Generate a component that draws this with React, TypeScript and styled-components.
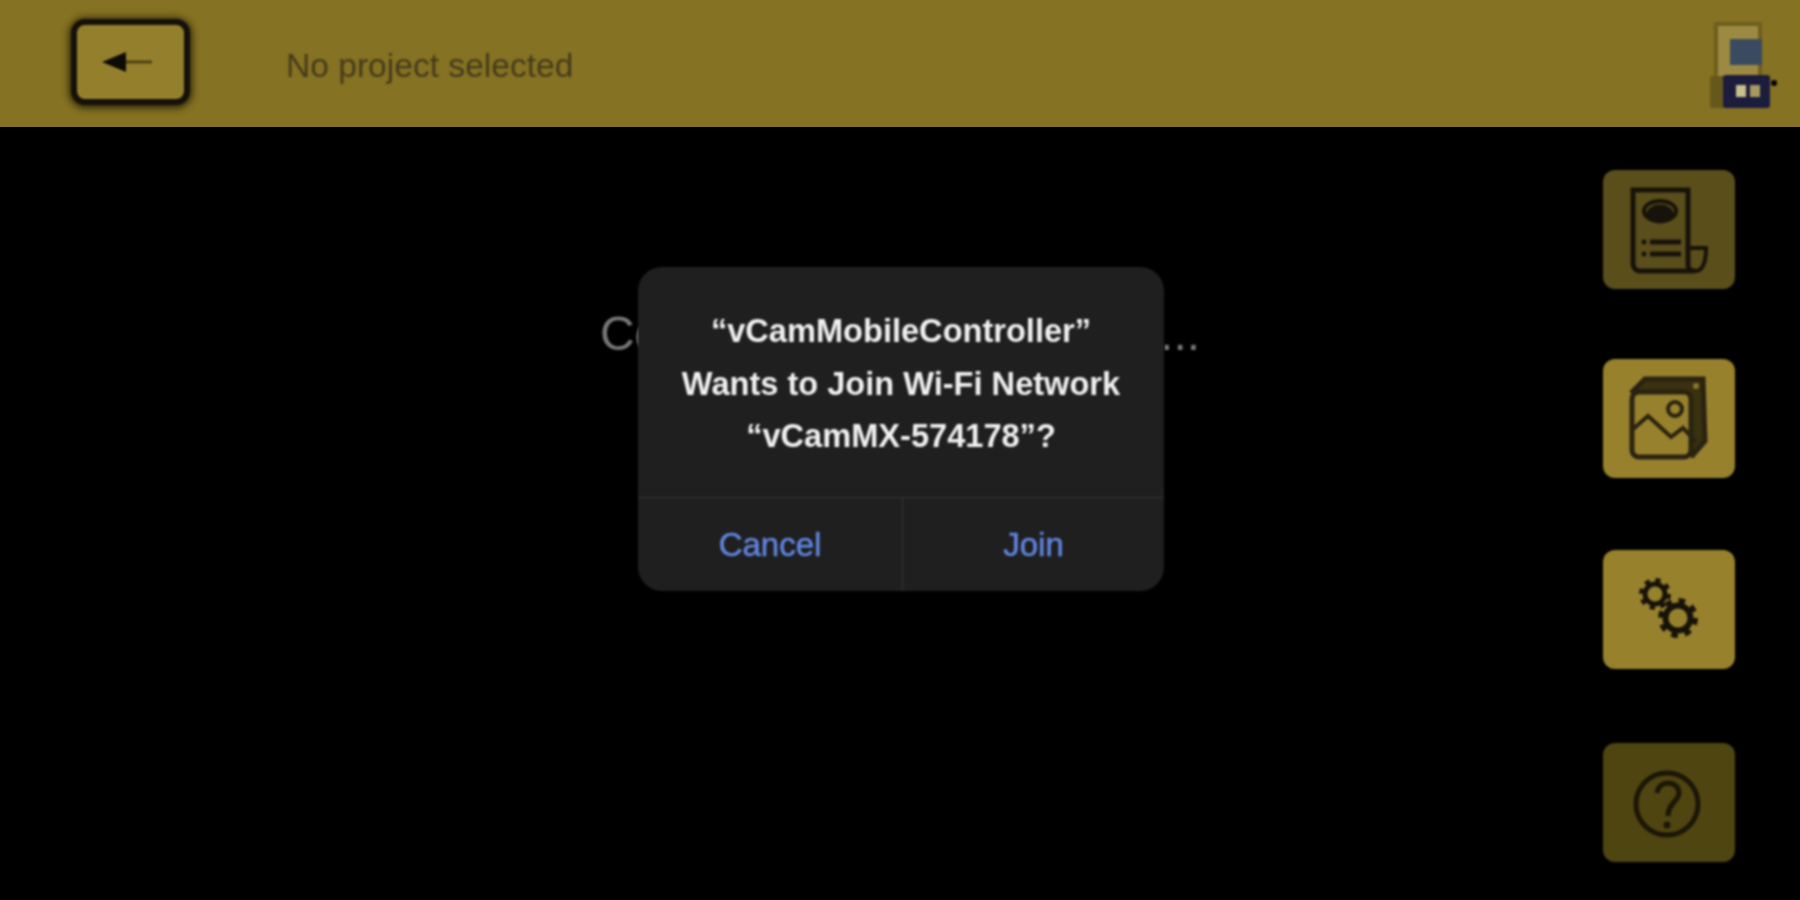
import { createGlobalStyle, styled } from "styled-components";

const GlobalStyle = createGlobalStyle`
  html, body {
    margin: 0;
    background: #000;
  }
  body {
    font-family: "Liberation Sans", Arial, sans-serif;
  }
`;

const Screen = styled.div`
  position: relative;
  width: 1800px;
  height: 900px;
  display: flex;
  flex-direction: column;
  overflow: hidden;
  background: #000;
`;

const Header = styled.header`
  height: 127px;
  flex: none;
  display: flex;
  align-items: center;
  padding: 0 20px 0 71px;
  background: #857222;
`;

const BackButton = styled.button`
  width: 119px;
  height: 86px;
  margin-top: -4px;
  box-sizing: border-box;
  padding: 0 8px 0 0;
  display: flex;
  align-items: center;
  justify-content: center;
  background: #94802c;
  border: 6px solid #15110a;
  border-radius: 14px;
  box-shadow: 0 1px 7px 2px rgba(15, 12, 2, 0.75);
  filter: blur(0.8px);
`;

const ProjectName = styled.span`
  margin: 4px 0 0 96px;
  flex: 1;
  font-size: 33.6px;
  color: #453b1c;
  filter: blur(0.9px);
`;

const DeviceGraphic = styled.svg`
  display: block;
  margin-top: 6px;
  filter: blur(1.2px);
`;

const Main = styled.main`
  flex: 1;
  display: grid;
  grid-template-columns: 197px 1fr 197px;
`;

const Status = styled.p`
  grid-column: 2;
  margin: 177px 0 0;
  text-align: center;
  font-size: 48px;
  line-height: 60px;
  color: #777;
  filter: blur(1px);
`;

const Sidebar = styled.nav`
  grid-column: 3;
  display: flex;
  flex-direction: column;
  gap: 72px;
  padding: 43px 65px 0 0;
  filter: blur(0.8px);
`;

const SideButton = styled.button<{ $bg: string }>`
  width: 132px;
  height: 119px;
  padding: 0;
  border: 0;
  border-radius: 12px;
  background: ${(p) => p.$bg};

  &:first-child {
    margin-bottom: -2px;
  }
  &:last-child {
    margin-top: 2px;
  }
`;

const Dialog = styled.div`
  position: absolute;
  top: 267px;
  left: 638px;
  width: 526px;
  height: 324px;
  display: flex;
  flex-direction: column;
  border-radius: 24px;
  background: #1f1f1f;
  filter: blur(1.1px);
`;

const DialogTitle = styled.div`
  flex: 1;
  padding-top: 38px;
  text-align: center;
  font-size: 32.6px;
  font-weight: 700;
  line-height: 52.5px;
  color: #f0f0f0;
`;

const DialogActions = styled.div`
  height: 93px;
  display: grid;
  grid-template-columns: 264px 1fr;
  border-top: 1px solid #333;
`;

const DialogAction = styled.button<{ $divider?: boolean }>`
  padding: 0;
  border: 0;
  border-left: ${(p) => (p.$divider ? "1px solid #333" : "0")};
  background: transparent;
  font-family: inherit;
  font-size: 33px;
  font-weight: 400;
  color: #5f84de;
  -webkit-text-stroke: 0.6px #5f84de;
`;

const IconSvg = styled.svg`
  display: block;
  width: 132px;
  height: 119px;
`;

const INK = "#17130a";

const DocIcon = () => (
  <IconSvg viewBox="0 0 132 119" fill="none" stroke={INK} strokeWidth="5">
    <path d="M30 20H85V95c0 4 3 6 7 6H38c-5 0-8-3-8-8Z" />
    <path d="M85 78h18c0 10-1 23-11 23" strokeWidth="4" />
    <ellipse cx="57" cy="41" rx="16" ry="10" strokeWidth="4" />
    <ellipse cx="57" cy="44" rx="11" ry="7" fill={INK} />
    <path d="M47 72h31M47 84h31" />
    <circle cx="41" cy="72" r="2.5" fill={INK} stroke="none" />
    <circle cx="41" cy="84" r="2.5" fill={INK} stroke="none" />
  </IconSvg>
);

const PictureIcon = () => (
  <IconSvg viewBox="0 0 132 119" fill="none" stroke="#2a2310" strokeWidth="5">
    <path d="M28 34 42 20H100l2 62-14 16" fill="#3a3110" />
    <rect x="29" y="33" width="59" height="65" rx="7" fill="#97812d" />
    <circle cx="72" cy="50" r="7" strokeWidth="4" />
    <path d="M29 71 45 57 68 78 80 69 93 83" strokeWidth="4" />
    <circle cx="93" cy="27" r="3" fill="#8a7630" stroke="none" />
  </IconSvg>
);

const GearsIcon = () => (
  <IconSvg viewBox="0 0 132 119" fill="none" stroke={INK}>
    <circle cx="52" cy="44" r="10" strokeWidth="5" />
    <circle cx="52" cy="44" r="13.5" strokeWidth="5" strokeDasharray="5 5.6" />
    <circle cx="75" cy="68" r="12.5" strokeWidth="6" />
    <circle cx="75" cy="68" r="17" strokeWidth="6" strokeDasharray="6.5 6.85" />
  </IconSvg>
);

const HelpIcon = () => (
  <IconSvg viewBox="0 0 132 119" fill="none" stroke="#1c1608" strokeWidth="5">
    <circle cx="64" cy="61" r="31" />
    <path d="M54 50c1-7 6-10 11-10 6 0 11 4 11 10 0 8-11 10-11 23" />
    <circle cx="64" cy="82" r="3.5" fill="#1c1608" stroke="none" />
  </IconSvg>
);

const BackArrow = () => (
  <svg width="50" height="24" viewBox="0 0 50 24">
    <path d="M20 12h30" stroke="#4e4013" strokeWidth="3" />
    <path d="M0 12 24 2v20Z" fill="#0d0b05" />
  </svg>
);

const DeviceIcon = () => (
  <DeviceGraphic width="72" height="94" viewBox="0 0 72 94">
    <rect x="8" y="4" width="44" height="54" fill="#9c8a42" stroke="#6f5f1e" strokeWidth="4" />
    <rect x="22" y="19" width="32" height="26" fill="#3a4a60" />
    <rect x="2" y="56" width="16" height="32" rx="3" fill="#66581a" />
    <rect x="15" y="55" width="47" height="33" rx="3" fill="#1c1c3c" />
    <rect x="28" y="65" width="10" height="12" fill="#c8c08c" />
    <rect x="42" y="65" width="10" height="12" fill="#a89a5c" />
    <circle cx="66" cy="63" r="3" fill="#000" />
  </DeviceGraphic>
);

export default function App() {
  return (
    <Screen>
      <GlobalStyle />
      <Header>
        <BackButton aria-label="Back">
          <BackArrow />
        </BackButton>
        <ProjectName>No project selected</ProjectName>
        <DeviceIcon />
      </Header>
      <Main>
        <Status>Connecting to vCam Wi-Fi...</Status>
        <Sidebar>
          <SideButton $bg="#5a4e1b">
            <DocIcon />
          </SideButton>
          <SideButton $bg="#97812d">
            <PictureIcon />
          </SideButton>
          <SideButton $bg="#97812d">
            <GearsIcon />
          </SideButton>
          <SideButton $bg="#4f4511">
            <HelpIcon />
          </SideButton>
        </Sidebar>
      </Main>
      <Dialog>
        <DialogTitle>
          “vCamMobileController”
          <br />
          Wants to Join Wi-Fi Network
          <br />
          “vCamMX-574178”?
        </DialogTitle>
        <DialogActions>
          <DialogAction>Cancel</DialogAction>
          <DialogAction $divider>Join</DialogAction>
        </DialogActions>
      </Dialog>
    </Screen>
  );
}
